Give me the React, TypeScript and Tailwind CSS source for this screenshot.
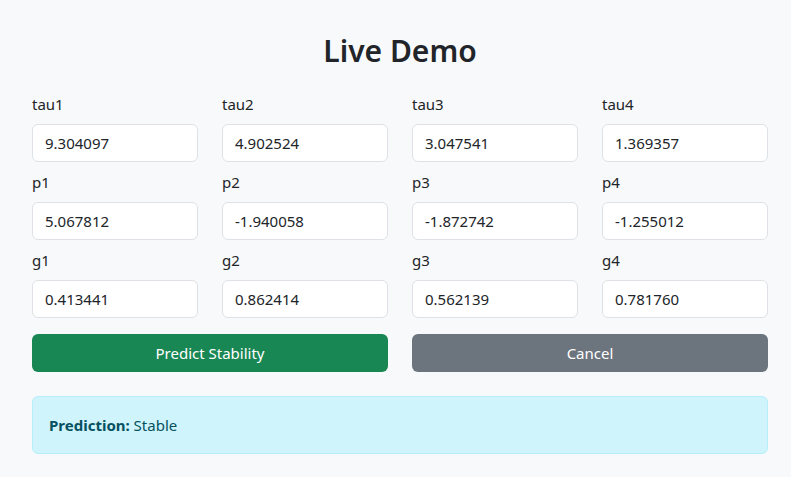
import React from 'react'

const fields: { label: string; value: string }[] = [
  { label: 'tau1', value: '9.304097' },
  { label: 'tau2', value: '4.902524' },
  { label: 'tau3', value: '3.047541' },
  { label: 'tau4', value: '1.369357' },
  { label: 'p1', value: '5.067812' },
  { label: 'p2', value: '-1.940058' },
  { label: 'p3', value: '-1.872742' },
  { label: 'p4', value: '-1.255012' },
  { label: 'g1', value: '0.413441' },
  { label: 'g2', value: '0.862414' },
  { label: 'g3', value: '0.562139' },
  { label: 'g4', value: '0.781760' },
]

export default function App() {
  return (
    <div
      className="min-h-screen bg-[#f8f9fa] pl-8 pr-[23px] pt-[32px] text-[#212529]"
      style={{ fontFamily: '"Noto Sans", "Open Sans", sans-serif' }}
    >
      <h2 className="mb-[22px] text-center text-[30px] font-semibold leading-[38px]">Live Demo</h2>

      <div className="grid grid-cols-4 gap-x-6 gap-y-2">
        {fields.map((f) => (
          <div key={f.label}>
            <label className="mb-2 block text-[15px] leading-6">{f.label}</label>
            <input
              type="text"
              defaultValue={f.value}
              className="block h-[38px] w-full rounded-md border border-[#dee2e6] bg-white px-3 text-[15px] text-[#212529] outline-none"
            />
          </div>
        ))}
      </div>

      <div className="mt-4 grid grid-cols-2 gap-x-6">
        <button className="h-[38px] rounded-md bg-[#198754] text-[15px] text-white">Predict Stability</button>
        <button className="h-[38px] rounded-md bg-[#6c757d] text-[15px] text-white">Cancel</button>
      </div>

      <div className="mt-6 rounded-md border border-[#b6effb] bg-[#cff4fc] px-4 py-4 text-[15px] leading-6 text-[#055160]">
        <strong className="font-bold">Prediction:</strong> Stable
      </div>
    </div>
  )
}
